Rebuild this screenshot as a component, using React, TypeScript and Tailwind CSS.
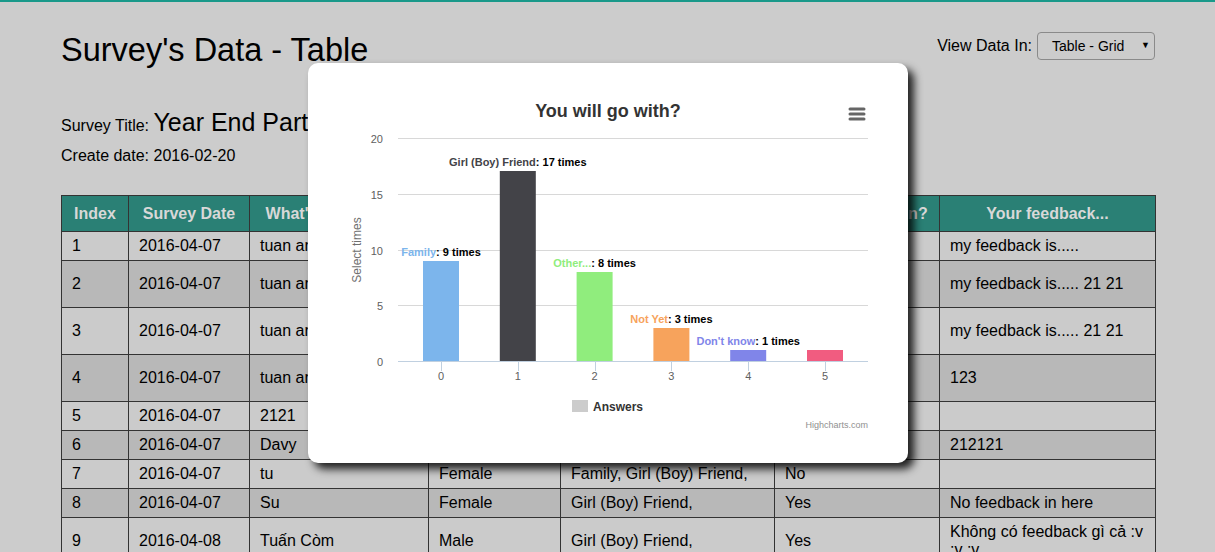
import React from "react";

type Row = {
  idx: number;
  date: string;
  name: string;
  gender: string;
  goWith: string;
  going: string;
  feedback: string;
};

const rows: Row[] = [
  { idx: 1, date: "2016-04-07", name: "tuan anh", gender: "Male", goWith: "Family,", going: "Yes", feedback: "my feedback is....." },
  { idx: 2, date: "2016-04-07", name: "tuan anh", gender: "Male", goWith: "Family, Girl (Boy) Friend, Other..., Not Yet,", going: "Yes", feedback: "my feedback is..... 21 21" },
  { idx: 3, date: "2016-04-07", name: "tuan anh", gender: "Male", goWith: "Family, Girl (Boy) Friend, Other..., Not Yet,", going: "Yes", feedback: "my feedback is..... 21 21" },
  { idx: 4, date: "2016-04-07", name: "tuan anh", gender: "Male", goWith: "Family, Girl (Boy) Friend, Other..., Don't know,", going: "Yes", feedback: "123" },
  { idx: 5, date: "2016-04-07", name: "2121", gender: "Male", goWith: "Family,", going: "Yes", feedback: "" },
  { idx: 6, date: "2016-04-07", name: "Davy", gender: "Male", goWith: "Girl (Boy) Friend,", going: "Yes", feedback: "212121" },
  { idx: 7, date: "2016-04-07", name: "tu", gender: "Female", goWith: "Family, Girl (Boy) Friend,", going: "No", feedback: "" },
  { idx: 8, date: "2016-04-07", name: "Su", gender: "Female", goWith: "Girl (Boy) Friend,", going: "Yes", feedback: "No feedback in here" },
  { idx: 9, date: "2016-04-08", name: "Tuấn Còm", gender: "Male", goWith: "Girl (Boy) Friend,", going: "Yes", feedback: "Không có feedback gì cả :v :v :v" },
];

const headers = [
  { label: "Index", w: "w-[67px]" },
  { label: "Survey Date", w: "w-[121px]" },
  { label: "What's your name?", w: "w-[179px]" },
  { label: "Gender", w: "w-[132px]" },
  { label: "You will go with?", w: "w-[214px]" },
  { label: "Are you going on?", w: "w-[165px]" },
  { label: "Your feedback...", w: "w-[216px]" },
];

// Highcharts-like column chart, drawn in modal coordinates (600 x 400)
const points = [
  { name: "Family", y: 9, color: "#7cb5ec" },
  { name: "Girl (Boy) Friend", y: 17, color: "#434348" },
  { name: "Other...", y: 8, color: "#90ed7d" },
  { name: "Not Yet", y: 3, color: "#f7a35c" },
  { name: "Don't know", y: 1, color: "#8085e9" },
  { name: "", y: 1, color: "#f15c80" },
];

const PLOT_LEFT = 90;
const PLOT_RIGHT = 560;
const Y0 = 298;
const UNIT = 223 / 20;
const cx = (i: number) => 133 + i * 76.8;

function Chart() {
  return (
    <svg width="600" height="400" viewBox="0 0 600 400" className="block" style={{ fontFamily: '"Liberation Sans", Arial, sans-serif' }}>
      <text x="300" y="54" textAnchor="middle" fontSize="18" fontWeight="bold" fill="#333333">
        You will go with?
      </text>

      {/* context menu button */}
      <g stroke="#666666" strokeWidth="3" strokeLinecap="round">
        <line x1="542" y1="46" x2="556" y2="46" />
        <line x1="542" y1="51" x2="556" y2="51" />
        <line x1="542" y1="56" x2="556" y2="56" />
      </g>

      {/* grid + y labels */}
      {[0, 5, 10, 15, 20].map((v) => {
        const y = Math.round(Y0 - v * UNIT) + 0.5;
        return (
          <g key={v}>
            {v > 0 && <line x1={PLOT_LEFT} x2={PLOT_RIGHT} y1={y} y2={y} stroke="#d8d8d8" strokeWidth="1" />}
            <text x="75" y={y + 4} textAnchor="end" fontSize="11" fill="#606060">
              {v}
            </text>
          </g>
        );
      })}

      <text transform="translate(53,187) rotate(-90)" textAnchor="middle" fontSize="12" fill="#707070">
        Select times
      </text>

      {/* bars */}
      {points.map((p, i) => {
        const h = Math.round(p.y * UNIT);
        return <rect key={i} x={cx(i) - 18} y={Y0 - h} width="36" height={h} fill={p.color} />;
      })}

      {/* x axis */}
      <line x1={PLOT_LEFT} x2={PLOT_RIGHT} y1={Y0 + 0.5} y2={Y0 + 0.5} stroke="#c0d0e0" strokeWidth="1" />
      {points.map((_, i) => (
        <g key={i}>
          <line x1={Math.round(cx(i)) + 0.5} x2={Math.round(cx(i)) + 0.5} y1={Y0} y2={Y0 + 10} stroke="#c0d0e0" strokeWidth="1" />
          <text x={cx(i)} y="317" textAnchor="middle" fontSize="11" fill="#606060">
            {i}
          </text>
        </g>
      ))}

      {/* data labels */}
      {points.map((p, i) =>
        p.name ? (
          <text key={i} x={cx(i)} y={Y0 - Math.round(p.y * UNIT) - 5} textAnchor="middle" fontSize="11" fontWeight="bold">
            <tspan fill={p.color}>{p.name}</tspan>
            <tspan fill="#000000">: {p.y} times</tspan>
          </text>
        ) : null
      )}

      {/* legend */}
      <rect x="264" y="337" width="16" height="12" fill="#cccccc" />
      <text x="285" y="348" fontSize="12" fontWeight="bold" fill="#333333">
        Answers
      </text>

      <text x="560" y="365" textAnchor="end" fontSize="9" fill="#909090">
        Highcharts.com
      </text>
    </svg>
  );
}

export default function App() {
  return (
    <div className="relative min-h-[552px] overflow-hidden bg-[#cccccc] font-['Liberation_Sans',Arial,sans-serif] text-black">
      <div className="h-[2px] bg-[#19998a]" />

      <div className="pl-[61px] pr-[60px]">
        {/* header */}
        <div className="flex items-start justify-between">
          <h1 className="mt-[28px] text-[32.5px] leading-[40px] font-normal">Survey's Data - Table</h1>
          <div className="mt-[30px] flex items-center gap-[5px]">
            <span className="text-[16px]">View Data In:</span>
            <div className="flex h-[28px] w-[118px] items-center justify-between rounded-[4px] border border-[#8a8a8a] pl-[14px] pr-[4px] text-[14px]">
              <span>Table - Grid</span>
              <span className="text-[9px]">▼</span>
            </div>
          </div>
        </div>

        {/* survey info */}
        <p className="mt-[36px] text-[16px] leading-[32px]">
          Survey Title: <span className="text-[25px]">Year End Party</span>
        </p>
        <p className="mt-[4px] text-[16px] leading-[20px]">Create date: 2016-02-20</p>

        {/* data table */}
        <table className="mt-[29px] w-[1094px] table-fixed border-collapse border border-[#333333] text-[16px] leading-[18px]">
          <thead>
            <tr className="bg-[#2a8075]">
              {headers.map((h) => (
                <th key={h.label} className={`${h.w} h-[36px] border border-[#333333] px-[10px] text-center font-bold text-[#d8d8d8]`}>
                  {h.label}
                </th>
              ))}
            </tr>
          </thead>
          <tbody>
            {rows.map((r) => (
              <tr key={r.idx} className={r.idx % 2 === 0 ? "bg-[#b8b8b8]" : "bg-[#cbcbcb]"}>
                {[String(r.idx), r.date, r.name, r.gender, r.goWith, r.going, r.feedback].map((c, i) => (
                  <td key={i} className="border border-[#333333] px-[10px] py-[5px] align-middle">
                    {c}
                  </td>
                ))}
              </tr>
            ))}
          </tbody>
        </table>
      </div>

      {/* chart modal */}
      <div className="absolute left-[308px] top-[63px] h-[400px] w-[600px] rounded-[10px] bg-white shadow-[6px_6px_8px_rgba(0,0,0,0.85)]">
        <Chart />
      </div>
    </div>
  );
}
